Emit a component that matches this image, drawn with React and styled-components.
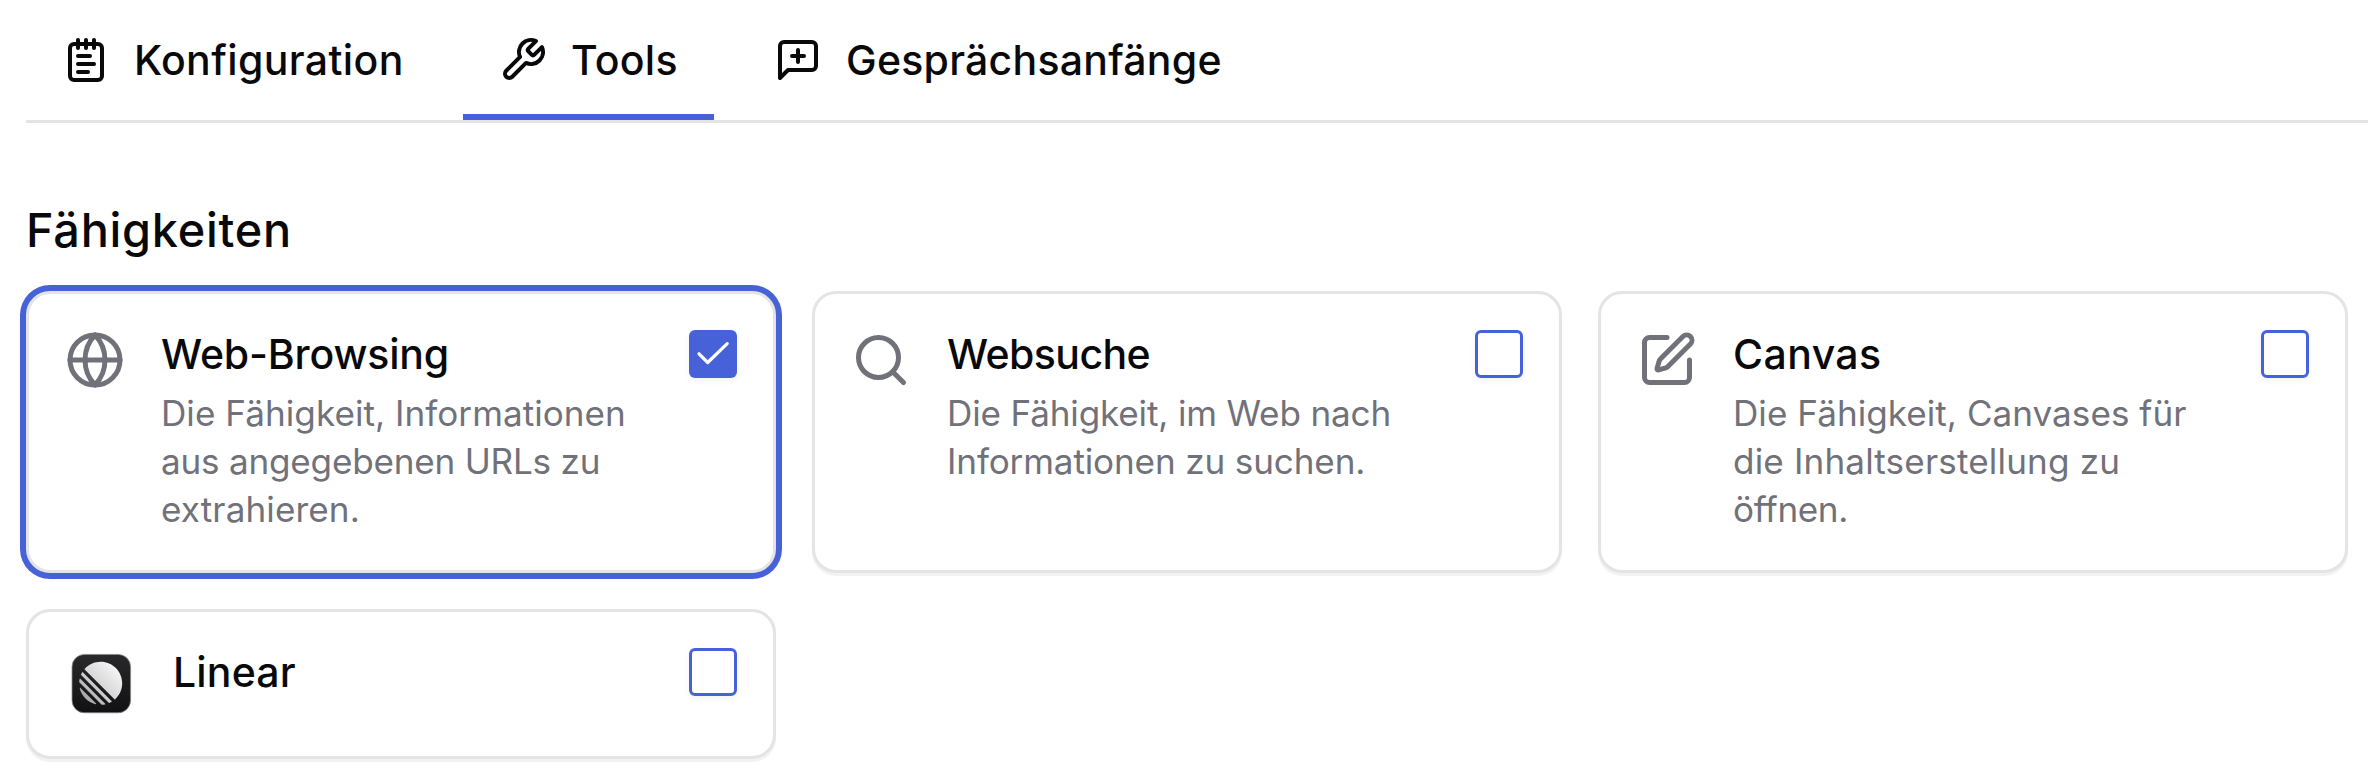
import React, { useState } from "react";
import styled, { createGlobalStyle } from "styled-components";
import { Globe, NotepadText, Search, SquarePen } from "lucide-react";

const GlobalStyle = createGlobalStyle`
  * {
    box-sizing: border-box;
  }

  body {
    margin: 0;
    background: #fff;
    color: #09090b;
    font-family: Inter, "Liberation Sans", sans-serif;
    overflow: hidden;
  }
`;

const Page = styled.main`
  width: 2368px;
  height: 772px;
  padding-left: 26px;
  overflow: hidden;
`;

const TabList = styled.nav`
  display: flex;
  gap: 24px;
  height: 123px;
  border-bottom: 3px solid #e4e4e5;
`;

const Tab = styled.button`
  display: flex;
  align-items: center;
  gap: 24px;
  width: ${(props) => props.$width}px;
  padding: 6px 0 0 36px;
  border: none;
  border-bottom: 6px solid
    ${(props) => (props.$active ? "#4762d8" : "transparent")};
  background: none;
  color: inherit;
  font: 500 41px/48px Inter, "Liberation Sans", sans-serif;
  letter-spacing: ${(props) => props.$tracking}px;
  white-space: nowrap;
  cursor: pointer;

  svg {
    flex: none;
  }
`;

const SectionTitle = styled.h2`
  margin: 83px 0 37px;
  font-size: 46.8px;
  font-weight: 500;
  line-height: 48px;
  letter-spacing: 0.76px;
`;

const CardGrid = styled.div`
  display: grid;
  grid-template-columns: repeat(3, 750px);
  gap: 36px;
`;

const Card = styled.div`
  display: flex;
  align-items: flex-start;
  padding: 36px;
  border: 3px solid #e4e4e5;
  border-radius: 24px;
  background: #fff;
  box-shadow: ${(props) =>
    props.$selected ? "0 0 0 6px #4762d8" : "0 3px 0 rgba(0, 0, 0, 0.05)"};
`;

const CardIcon = styled.div`
  display: flex;
  flex: none;
  margin-right: 36px;
  color: #71717a;
`;

const CardBody = styled.div`
  flex: 1;
  min-width: 0;
`;

const CardTitle = styled.h3`
  margin: 0;
  font-size: 41px;
  font-weight: 500;
  line-height: 48px;
  letter-spacing: ${(props) => props.$tracking}px;
`;

const Description = styled.p`
  margin: 11px 0 1px;
  color: #71717a;
  font-size: 35.1px;
  line-height: 48px;
`;

const Line = styled.span`
  display: block;
  letter-spacing: ${(props) => props.$tracking}px;
  white-space: nowrap;
`;

const Checkbox = styled.button`
  display: flex;
  flex: none;
  width: 48px;
  height: 48px;
  padding: 0;
  border: ${(props) => (props.$checked ? "none" : "3px solid #4762d8")};
  border-radius: 6px;
  background: ${(props) => (props.$checked ? "#4762d8" : "#fff")};
  box-shadow: 0 3px 6px rgba(0, 0, 0, 0.05);
  cursor: pointer;
`;

const strokeProps = {
  width: 48,
  height: 48,
  viewBox: "0 0 24 24",
  fill: "none",
  stroke: "currentColor",
  strokeWidth: 2,
  strokeLinecap: "round",
  strokeLinejoin: "round",
};

const WrenchIcon = () => (
  <svg {...strokeProps}>
    <path d="M14.7 6.3a1 1 0 0 0 0 1.4l1.6 1.6a1 1 0 0 0 1.4 0l3.77-3.77a6 6 0 0 1-7.94 7.94l-6.91 6.91a2.12 2.12 0 0 1-3-3l6.91-6.91a6 6 0 0 1 7.94-7.94l-3.76 3.76z" />
  </svg>
);

const MessagePlusIcon = () => (
  <svg {...strokeProps}>
    <path d="M21 15a2 2 0 0 1-2 2H7l-4 4V5a2 2 0 0 1 2-2h14a2 2 0 0 1 2 2z" />
    <path d="M12 7v6M9 10h6" />
  </svg>
);

const CheckMark = () => (
  <svg width="48" height="48" viewBox="0 0 48 48" fill="none">
    <path
      d="M10 23.8 18.7 32.5 38.2 13.6"
      stroke="#fff"
      strokeWidth="3.2"
      strokeLinecap="round"
      strokeLinejoin="round"
    />
  </svg>
);

const LinearLogo = () => (
  <svg width="72" height="72" viewBox="0 0 72 72">
    <defs>
      <linearGradient id="tile" x1="0" y1="0" x2="0" y2="1">
        <stop offset="0" stopColor="#29292b" />
        <stop offset="1" stopColor="#111113" />
      </linearGradient>
      <linearGradient id="disc" x1="0.1" y1="0.8" x2="0.8" y2="0.1">
        <stop offset="0" stopColor="#a6a6a8" />
        <stop offset="0.45" stopColor="#d6d6d6" />
        <stop offset="1" stopColor="#f4f4f4" />
      </linearGradient>
    </defs>
    <rect
      x="7"
      y="6.4"
      width="58.6"
      height="58.4"
      rx="12.5"
      fill="url(#tile)"
      stroke="#8a8a8a"
      strokeWidth="0.8"
    />
    <path
      transform="translate(14.2 13.8) scale(0.43)"
      fill="url(#disc)"
      d="M1.225 61.523c-.222-.949.908-1.546 1.597-.857l36.512 36.512c.69.69.092 1.82-.857 1.597C20.052 94.452 5.548 79.949 1.225 61.523ZM.002 46.889a1 1 0 0 0 .29.76l52.058 52.06c.201.2.478.307.761.289 2.37-.148 4.694-.46 6.962-.926.765-.157 1.03-1.096.478-1.648L2.576 39.448c-.552-.551-1.491-.286-1.648.479-.466 2.268-.779 4.593-.926 6.962ZM4.211 29.705a1 1 0 0 0 .208 1.1l64.776 64.777c.289.29.726.374 1.1.207 1.786-.795 3.517-1.692 5.185-2.684.552-.328.637-1.086.183-1.54L8.436 24.336c-.454-.454-1.213-.369-1.541.184-.991 1.668-1.888 3.399-2.684 5.185ZM12.659 18.074a1 1 0 0 1-.045-1.354C21.78 6.459 35.111 0 49.952 0 77.593 0 100 22.407 100 50.048c0 14.84-6.46 28.173-16.72 37.338a1 1 0 0 1-1.354-.045L12.659 18.074Z"
    />
  </svg>
);

const tabs = [
  {
    label: "Konfiguration",
    icon: <NotepadText size={48} />,
    width: 413,
    tracking: 0.38,
  },
  { label: "Tools", icon: <WrenchIcon />, width: 251, tracking: 0.25 },
  {
    label: "Gesprächsanfänge",
    icon: <MessagePlusIcon />,
    width: 518,
    tracking: 0.25,
  },
];

// description lines are [text, letter spacing]
const tools = [
  {
    title: "Web-Browsing",
    tracking: -0.16,
    icon: <Globe size={60} />,
    lines: [
      ["Die Fähigkeit, Informationen", 0.05],
      ["aus angegebenen URLs zu", -0.2],
      ["extrahieren.", 0.12],
    ],
  },
  {
    title: "Websuche",
    tracking: -0.57,
    icon: <Search size={60} />,
    lines: [
      ["Die Fähigkeit, im Web nach", -0.16],
      ["Informationen zu suchen.", -0.13],
    ],
  },
  {
    title: "Canvas",
    tracking: 0.42,
    icon: <SquarePen size={60} />,
    lines: [
      ["Die Fähigkeit, Canvases für", 0.04],
      ["die Inhaltserstellung zu", 0.16],
      ["öffnen.", -0.4],
    ],
  },
  { title: "Linear", tracking: 0.16, icon: <LinearLogo />, lines: [] },
];

const ToolCard = ({ tool, checked, onToggle }) => (
  <Card $selected={checked}>
    <CardIcon>{tool.icon}</CardIcon>
    <CardBody>
      <CardTitle $tracking={tool.tracking}>{tool.title}</CardTitle>
      {tool.lines.length > 0 && (
        <Description>
          {tool.lines.map(([text, tracking]) => (
            <Line key={text} $tracking={tracking}>
              {text}
            </Line>
          ))}
        </Description>
      )}
    </CardBody>
    <Checkbox
      role="checkbox"
      aria-checked={checked}
      aria-label={tool.title}
      $checked={checked}
      onClick={onToggle}
    >
      {checked && <CheckMark />}
    </Checkbox>
  </Card>
);

const App = () => {
  const [activeTab, setActiveTab] = useState("Tools");
  const [selected, setSelected] = useState(["Web-Browsing"]);

  const toggle = (title) =>
    setSelected(
      selected.includes(title)
        ? selected.filter((item) => item !== title)
        : [...selected, title]
    );

  return (
    <Page>
      <GlobalStyle />
      <TabList>
        {tabs.map((tab) => (
          <Tab
            key={tab.label}
            $active={tab.label === activeTab}
            $width={tab.width}
            $tracking={tab.tracking}
            onClick={() => setActiveTab(tab.label)}
          >
            {tab.icon}
            {tab.label}
          </Tab>
        ))}
      </TabList>
      <SectionTitle>Fähigkeiten</SectionTitle>
      <CardGrid>
        {tools.map((tool) => (
          <ToolCard
            key={tool.title}
            tool={tool}
            checked={selected.includes(tool.title)}
            onToggle={() => toggle(tool.title)}
          />
        ))}
      </CardGrid>
    </Page>
  );
};

export default App;
